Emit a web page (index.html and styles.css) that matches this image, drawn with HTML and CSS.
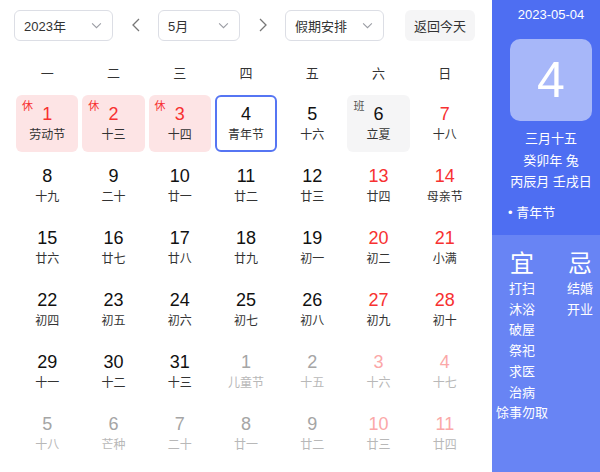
FILE: index.html
```html
<!DOCTYPE html>
<html lang="zh">
<head>
<meta charset="utf-8">
<link rel="stylesheet" href="styles.css">
</head>
<body>
<div class="page">
  <div class="main">
    <div class="toolbar">
      <div class="select sel-year"><span>2023年</span><svg class="chev" viewBox="0 0 12 8"><path d="M1 1.5 L6 6.5 L11 1.5"/></svg></div>
      <div class="arrow"><svg viewBox="0 0 8 14"><path d="M7 1 L1 7 L7 13"/></svg></div>
      <div class="select sel-month"><span>5月</span><svg class="chev" viewBox="0 0 12 8"><path d="M1 1.5 L6 6.5 L11 1.5"/></svg></div>
      <div class="arrow"><svg viewBox="0 0 8 14"><path d="M1 1 L7 7 L1 13"/></svg></div>
      <div class="select sel-holiday"><span>假期安排</span><svg class="chev" viewBox="0 0 12 8"><path d="M1 1.5 L6 6.5 L11 1.5"/></svg></div>
      <div class="today-btn">返回今天</div>
    </div>
    <div class="weekdays">
      <div>一</div><div>二</div><div>三</div><div>四</div><div>五</div><div>六</div><div>日</div>
    </div>
    <div class="grid">
      <div class="cell rest"><span class="tag">休</span><span class="num red">1</span><span class="lunar">劳动节</span></div>
      <div class="cell rest"><span class="tag">休</span><span class="num red">2</span><span class="lunar">十三</span></div>
      <div class="cell rest"><span class="tag">休</span><span class="num red">3</span><span class="lunar">十四</span></div>
      <div class="cell today"><span class="num">4</span><span class="lunar">青年节</span></div>
      <div class="cell"><span class="num">5</span><span class="lunar">十六</span></div>
      <div class="cell work"><span class="tag tag-work">班</span><span class="num">6</span><span class="lunar">立夏</span></div>
      <div class="cell"><span class="num red">7</span><span class="lunar">十八</span></div>

      <div class="cell"><span class="num">8</span><span class="lunar">十九</span></div>
      <div class="cell"><span class="num">9</span><span class="lunar">二十</span></div>
      <div class="cell"><span class="num">10</span><span class="lunar">廿一</span></div>
      <div class="cell"><span class="num">11</span><span class="lunar">廿二</span></div>
      <div class="cell"><span class="num">12</span><span class="lunar">廿三</span></div>
      <div class="cell"><span class="num red">13</span><span class="lunar">廿四</span></div>
      <div class="cell"><span class="num red">14</span><span class="lunar">母亲节</span></div>

      <div class="cell"><span class="num">15</span><span class="lunar">廿六</span></div>
      <div class="cell"><span class="num">16</span><span class="lunar">廿七</span></div>
      <div class="cell"><span class="num">17</span><span class="lunar">廿八</span></div>
      <div class="cell"><span class="num">18</span><span class="lunar">廿九</span></div>
      <div class="cell"><span class="num">19</span><span class="lunar">初一</span></div>
      <div class="cell"><span class="num red">20</span><span class="lunar">初二</span></div>
      <div class="cell"><span class="num red">21</span><span class="lunar">小满</span></div>

      <div class="cell"><span class="num">22</span><span class="lunar">初四</span></div>
      <div class="cell"><span class="num">23</span><span class="lunar">初五</span></div>
      <div class="cell"><span class="num">24</span><span class="lunar">初六</span></div>
      <div class="cell"><span class="num">25</span><span class="lunar">初七</span></div>
      <div class="cell"><span class="num">26</span><span class="lunar">初八</span></div>
      <div class="cell"><span class="num red">27</span><span class="lunar">初九</span></div>
      <div class="cell"><span class="num red">28</span><span class="lunar">初十</span></div>

      <div class="cell"><span class="num">29</span><span class="lunar">十一</span></div>
      <div class="cell"><span class="num">30</span><span class="lunar">十二</span></div>
      <div class="cell"><span class="num">31</span><span class="lunar">十三</span></div>
      <div class="cell other"><span class="num">1</span><span class="lunar">儿童节</span></div>
      <div class="cell other"><span class="num">2</span><span class="lunar">十五</span></div>
      <div class="cell other"><span class="num red">3</span><span class="lunar">十六</span></div>
      <div class="cell other"><span class="num red">4</span><span class="lunar">十七</span></div>

      <div class="cell other"><span class="num">5</span><span class="lunar">十八</span></div>
      <div class="cell other"><span class="num">6</span><span class="lunar">芒种</span></div>
      <div class="cell other"><span class="num">7</span><span class="lunar">二十</span></div>
      <div class="cell other"><span class="num">8</span><span class="lunar">廿一</span></div>
      <div class="cell other"><span class="num">9</span><span class="lunar">廿二</span></div>
      <div class="cell other"><span class="num red">10</span><span class="lunar">廿三</span></div>
      <div class="cell other"><span class="num red">11</span><span class="lunar">廿四</span></div>
    </div>
  </div>
  <div class="side">
    <div class="side-top">
      <div class="side-date">2023-05-04</div>
      <div class="big-day">4</div>
      <div class="side-info">
        <div>三月十五</div>
        <div>癸卯年 兔</div>
        <div>丙辰月 壬戌日</div>
      </div>
      <div class="side-fest">• 青年节</div>
    </div>
    <div class="side-bottom">
      <div class="col col-yi">
        <div class="col-title">宜</div>
        <div>打扫</div>
        <div>沐浴</div>
        <div>破屋</div>
        <div>祭祀</div>
        <div>求医</div>
        <div>治病</div>
        <div>馀事勿取</div>
      </div>
      <div class="col col-ji">
        <div class="col-title">忌</div>
        <div>结婚</div>
        <div>开业</div>
      </div>
    </div>
  </div>
</div>
</body>
</html>
```

FILE: styles.css
```css
* { box-sizing: border-box; }
html, body { margin: 0; padding: 0; }
body {
  width: 600px;
  height: 472px;
  overflow: hidden;
  background: #fff;
  font-family: "Liberation Sans", Arial, "Noto Sans CJK SC", sans-serif;
  color: #222;
}
.page {
  display: flex;
  width: 600px;
  height: 472px;
}
.main {
  width: 492px;
  padding: 9px 14px 0 14px;
}
.toolbar {
  display: flex;
  align-items: center;
  height: 32px;
}
.select {
  height: 31px;
  border: 1px solid #dcdee5;
  border-radius: 6px;
  display: flex;
  align-items: center;
  justify-content: space-between;
  padding: 0 10px 0 9px;
  font-size: 13px;
  color: #333;
}
.sel-year { width: 99px; }
.sel-month { width: 82px; }
.sel-holiday { width: 99px; }
.chev {
  width: 11px;
  height: 7px;
  fill: none;
  stroke: #9a9ca3;
  stroke-width: 1.2;
}
.arrow {
  width: 45px;
  display: flex;
  justify-content: center;
  align-items: center;
}
.arrow svg {
  width: 8px;
  height: 14px;
  fill: none;
  stroke: #777;
  stroke-width: 1.3;
}
.today-btn {
  margin-left: 21px;
  width: 70px;
  height: 31px;
  border-radius: 6px;
  background: #f5f5f6;
  font-size: 13px;
  color: #333;
  display: flex;
  align-items: center;
  justify-content: center;
}
.weekdays {
  display: grid;
  grid-template-columns: repeat(7, 1fr);
  margin-top: 11px;
  height: 40px;
  align-items: center;
  font-size: 13px;
  color: #333;
  text-align: center;
}
.grid {
  margin-top: 3px;
  display: grid;
  grid-template-columns: repeat(7, 1fr);
  grid-auto-rows: 57px;
  row-gap: 5px;
}
.cell {
  position: relative;
  margin: 0 2px;
  border-radius: 6px;
  display: flex;
  flex-direction: column;
  align-items: center;
  justify-content: center;
}
.num {
  font-size: 18px;
  line-height: 22px;
  color: #111;
}
.lunar {
  font-size: 12px;
  line-height: 18px;
  margin-top: 1px;
  color: #333;
}
.red { color: #f73131; }
.rest { background: #fde4e5; }
.work { background: #f5f5f6; }
.today { border: 2px solid #5675f3; }
.tag {
  position: absolute;
  top: 5px;
  left: 6px;
  font-size: 11px;
  line-height: 13px;
  color: #f73131;
}
.tag-work { color: #555; }
.other .num { color: #a5a5a5; }
.other .num.red { color: #fba8a8; }
.other .lunar { color: #b8b8b8; }

.side {
  width: 108px;
  display: flex;
  flex-direction: column;
  background: #4e6ef2;
  color: #fff;
}
.side-top {
  height: 235px;
  padding-left: 10px;
  display: flex;
  flex-direction: column;
  align-items: center;
}
.side-date {
  margin-top: 6px;
  font-size: 13px;
  line-height: 18px;
}
.big-day {
  margin-top: 15px;
  width: 82px;
  height: 82px;
  border-radius: 10px;
  background: rgba(255, 255, 255, 0.5);
  font-size: 50px;
  display: flex;
  align-items: center;
  justify-content: center;
}
.side-info {
  margin-top: 7px;
  font-size: 13px;
  line-height: 21.5px;
  text-align: center;
}
.side-fest {
  align-self: flex-start;
  margin-top: 11px;
  margin-left: 6px;
  font-size: 13px;
  line-height: 18px;
}
.side-bottom {
  flex: 1;
  background: #6884f4;
  display: flex;
  padding-left: 2px;
  padding-top: 15px;
}
.col {
  display: flex;
  flex-direction: column;
  align-items: center;
  font-size: 13px;
  line-height: 20.7px;
}
.col-yi { width: 56px; }
.col-ji { width: 40px; margin-left: 10px; }
.col-title {
  font-size: 24px;
  line-height: 28px;
  margin-bottom: 1px;
}
```
